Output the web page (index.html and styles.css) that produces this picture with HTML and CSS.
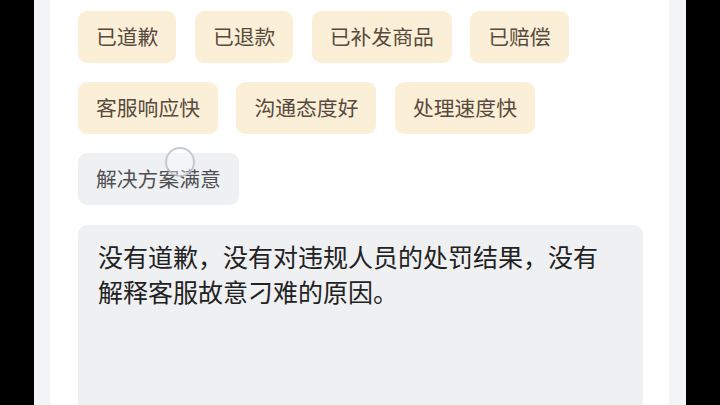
FILE: index.html
```html
<!DOCTYPE html>
<html lang="zh-CN">
<head>
<meta charset="utf-8">
<title>评价</title>
<link rel="stylesheet" href="styles.css">
</head>
<body>
<div class="phone">
  <main class="content">
    <div class="tags">
      <span class="tag">已道歉</span>
      <span class="tag">已退款</span>
      <span class="tag">已补发商品</span>
      <span class="tag">已赔偿</span>
      <span class="tag">客服响应快</span>
      <span class="tag">沟通态度好</span>
      <span class="tag">处理速度快</span>
      <span class="tag tag-off">解决方案满意<span class="spinner"></span></span>
    </div>
    <div class="comment">没有道歉，没有对违规人员的处罚结果，没有解释客服故意刁难的原因。</div>
  </main>
</div>
</body>
</html>
```
FILE: styles.css
```css
html, body {
  margin: 0;
  padding: 0;
  height: 405px;
  overflow: hidden;
  background: #000;
  font-family: "Noto Sans CJK SC", "Noto Sans", sans-serif;
}
.phone {
  margin: 0 34px;
  height: 405px;
  background: #f3f4f5;
  padding: 0 17px 0 16px;
}
.content {
  display: flex;
  flex-direction: column;
  background: #fff;
  height: 405px;
  padding: 11px 26px 0 28px;
  box-sizing: border-box;
}
.tags {
  display: flex;
  flex-wrap: wrap;
  gap: 19px 18.5px;
}
.tag {
  position: relative;
  display: block;
  height: 52px;
  line-height: 51px;
  padding: 0 18px;
  font-size: 20.8px;
  color: #574a3e;
  background: #fcefd7;
  border-radius: 9px;
}
.tag-off {
  background: #eff0f2;
  color: #505154;
}
.spinner {
  position: absolute;
  left: 87px;
  top: -6px;
  width: 26px;
  height: 26px;
  border-radius: 50%;
  border: 2px solid rgba(178, 186, 200, 0.75);
  background: rgba(255, 255, 255, 0.35);
}
.comment {
  flex: 1;
  margin-top: 20px;
  background: #eff0f2;
  border-radius: 9px 9px 0 0;
  padding: 14px 25px 0 20px;
  font-size: 25px;
  line-height: 35px;
  color: #222;
}
```
